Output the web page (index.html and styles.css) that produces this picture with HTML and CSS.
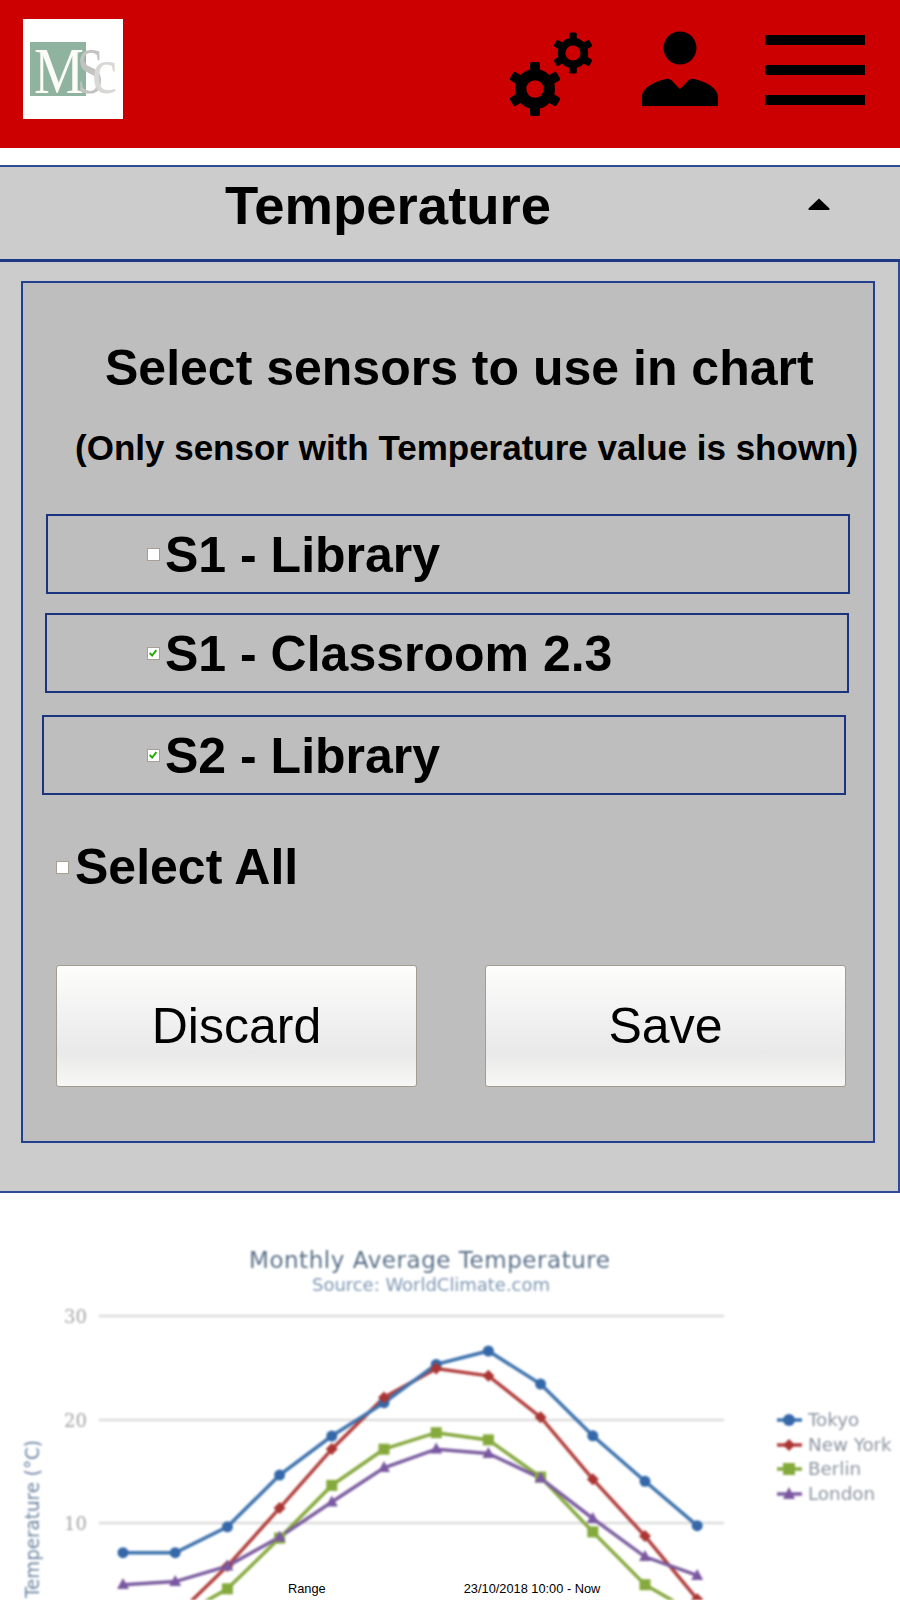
FILE: index.html
```html
<!DOCTYPE html>
<html lang="en">
<head>
<meta charset="utf-8">
<title>Temperature</title>
<link rel="stylesheet" href="styles.css">
</head>
<body>
<header class="topbar">
  <svg class="logo" viewBox="0 0 100 100" role="img" aria-label="MSc logo">
    <rect width="100" height="100" fill="#fff"/>
    <rect x="7" y="23" width="56" height="54" fill="#8fb39f"/>
    <text class="logo-m" x="11" y="74" textLength="50" lengthAdjust="spacingAndGlyphs">M</text>
    <text class="logo-s" x="54" y="74" textLength="27" lengthAdjust="spacingAndGlyphs">S</text>
    <text class="logo-c" x="69" y="74" textLength="25" lengthAdjust="spacingAndGlyphs">c</text>
  </svg>
  <div class="tools">
    <svg class="tool tool-gears" viewBox="500 0 96 148" aria-label="Settings">
      <defs>
        <g id="gear">
          <circle r="14.3" fill="none" stroke="#000" stroke-width="11.4"/>
          <rect x="-5" y="-27" width="10" height="54" rx="2"/>
          <rect x="-5" y="-27" width="10" height="54" rx="2" transform="rotate(60)"/>
          <rect x="-5" y="-27" width="10" height="54" rx="2" transform="rotate(120)"/>
        </g>
      </defs>
      <mask id="bighole"><rect x="500" width="96" height="148" fill="#fff"/><circle cx="535" cy="89" r="8.7" fill="#000"/></mask>
      <mask id="smallhole"><rect x="500" width="96" height="148" fill="#fff"/><circle cx="573" cy="53" r="7.6" fill="#000"/></mask>
      <g mask="url(#bighole)"><use href="#gear" transform="translate(535 89)"/></g>
      <g mask="url(#smallhole)"><use href="#gear" transform="translate(573 53) scale(.76)"/></g>
    </svg>
    <svg class="tool tool-user" viewBox="642 0 76 148" aria-label="User">
      <circle cx="680" cy="48" r="16.5"/>
      <path d="M642 106V97C642 88 654 82 664 79.500C668 78 671 79 674 83L680 89L686 83C689 79 692 78 696 79.500C706 82 718 88 718 97V106Z"/>
    </svg>
    <div class="burger" aria-label="Menu"><span></span><span></span><span></span></div>
  </div>
</header>

<main>
  <section class="accordion">
    <div class="accordion-head">
      <h1 class="accordion-title">Temperature</h1>
      <svg class="caret" viewBox="0 0 22 12"><path d="M11 0.5L21.5 10.5Q22 12 20.5 12H1.500Q0 12 0.500 10.500Z"/></svg>
    </div>
    <div class="panel">
      <div class="box">
        <h2 class="box-title">Select sensors to use in chart</h2>
        <p class="box-note">(Only sensor with Temperature value is shown)</p>
        <div class="sensor sensor-a"><span class="check"></span><span class="label">S1 - Library</span></div>
        <div class="sensor sensor-b"><span class="check is-on"><svg viewBox="0 0 12 12"><path d="M2 6L5 9.200L10 2.500"/></svg></span><span class="label">S1 - Classroom 2.3</span></div>
        <div class="sensor sensor-c"><span class="check is-on"><svg viewBox="0 0 12 12"><path d="M2 6L5 9.200L10 2.500"/></svg></span><span class="label">S2 - Library</span></div>
        <div class="select-all"><span class="check"></span><span>Select All</span></div>
        <div class="actions">
          <button class="btn" type="button">Discard</button>
          <button class="btn" type="button">Save</button>
        </div>
      </div>
    </div>
  </section>

  <section class="chart">
    <svg class="chart-svg" viewBox="0 1193 900 407">
      <text class="c-title" x="249" y="1268" textLength="361" lengthAdjust="spacing">Monthly Average Temperature</text>
      <text class="c-sub" x="312" y="1291" textLength="238" lengthAdjust="spacing">Source: WorldClimate.com</text>
      <g class="grid">
        <line x1="99" x2="724" y1="1316" y2="1316"/>
        <line x1="99" x2="724" y1="1420" y2="1420"/>
        <line x1="99" x2="724" y1="1523" y2="1523"/>
      </g>
      <text class="c-axis" x="64" y="1323">30</text>
      <text class="c-axis" x="64" y="1427">20</text>
      <text class="c-axis" x="64" y="1530">10</text>
      <text class="c-ytitle" transform="translate(39 1598) rotate(-90)" textLength="158" lengthAdjust="spacingAndGlyphs">Temperature (°C)</text>

      <polyline class="s s-ny" points="123,1627 175.2,1616.7 227.4,1566.1 279.6,1508.2 331.8,1449.2 384,1397.5 436.2,1368.6 488.400,1375.8 540.6,1417.2 592.8,1479.2 645,1536.1 697.2,1599.2"/>
      <polyline class="s s-berlin" points="123,1634.3 175.2,1618.8 227.4,1588.8 279.6,1538.1 331.8,1485.4 384,1449.2 436.2,1432.7 488.400,1439.9 540.6,1477.1 592.8,1531.9 645,1584.7 697.2,1614.7"/>
      <polyline class="s s-london" points="123,1584.7 175.2,1581.6 227.4,1566.1 279.6,1537.1 331.8,1502 384,1467.8 436.2,1449.2 488.400,1453.4 540.6,1478.2 592.8,1518.5 645,1556.8 697.2,1575.4"/>
      <polyline class="s s-tokyo" points="123,1552.7 175.2,1552.7 227.4,1526.8 279.6,1475.1 331.8,1436 384,1402.7 436.2,1364.4 488.400,1351 540.6,1384.1 592.8,1435.8 645,1481.3 697.2,1525.7"/>

      <g class="m-tokyo">
        <circle cx="123" cy="1552.7" r="5.500"/><circle cx="175.2" cy="1552.7" r="5.500"/><circle cx="227.4" cy="1526.8" r="5.500"/><circle cx="279.6" cy="1475.1" r="5.500"/><circle cx="331.8" cy="1436" r="5.500"/><circle cx="384" cy="1402.7" r="5.500"/><circle cx="436.2" cy="1364.4" r="5.500"/><circle cx="488.4" cy="1351" r="5.500"/><circle cx="540.6" cy="1384.1" r="5.500"/><circle cx="592.8" cy="1435.8" r="5.500"/><circle cx="645" cy="1481.3" r="5.500"/><circle cx="697.2" cy="1525.7" r="5.500"/>
      </g>
      <g class="m-ny">
        <path d="M279.6 1502l6 6-6 6-6-6zM331.800 1443l6 6-6 6-6-6zM384 1391.500l6 6-6 6-6-6zM436.200 1362.600l6 6-6 6-6-6zM488.400 1369.800l6 6-6 6-6-6zM540.600 1411.200l6 6-6 6-6-6zM592.800 1473.200l6 6-6 6-6-6zM645 1530.100l6 6-6 6-6-6zM697.200 1593.200l6 6-6 6-6-6zM227.400 1560.100l6 6-6 6-6-6z"/>
      </g>
      <g class="m-berlin">
        <rect x="221.900" y="1583.300" width="11" height="11"/><rect x="274.100" y="1532.600" width="11" height="11"/><rect x="326.300" y="1479.900" width="11" height="11"/><rect x="378.500" y="1443.700" width="11" height="11"/><rect x="430.700" y="1427.200" width="11" height="11"/><rect x="482.900" y="1434.400" width="11" height="11"/><rect x="535.100" y="1471.600" width="11" height="11"/><rect x="587.300" y="1526.400" width="11" height="11"/><rect x="639.500" y="1579.200" width="11" height="11"/>
      </g>
      <g class="m-london">
        <path d="M123 1578l6 11h-12zM175.200 1575l6 11h-12zM227.400 1559.500l6 11h-12zM279.600 1530.500l6 11h-12zM331.800 1495.500l6 11h-12zM384 1461l6 11h-12zM436.200 1442.500l6 11h-12zM488.400 1447l6 11h-12zM540.600 1471.500l6 11h-12zM592.800 1512l6 11h-12zM645 1550l6 11h-12zM697.200 1569l6 11h-12z"/>
      </g>

      <g class="legend">
        <line class="s-tokyo" x1="777" x2="802" y1="1420" y2="1420"/>
        <circle class="m-tokyo" cx="789" cy="1420" r="6"/>
        <text class="c-legend" x="808" y="1426">Tokyo</text>
        <line class="s-ny" x1="777" x2="802" y1="1445" y2="1445"/>
        <path class="m-ny" d="M789 1439l6 6-6 6-6-6z"/>
        <text class="c-legend" x="808" y="1451">New York</text>
        <line class="s-berlin" x1="777" x2="802" y1="1469" y2="1469"/>
        <rect class="m-berlin" x="783" y="1463" width="12" height="12"/>
        <text class="c-legend" x="808" y="1475">Berlin</text>
        <line class="s-london" x1="777" x2="802" y1="1494" y2="1494"/>
        <path class="m-london" d="M789 1487l6 12h-12z"/>
        <text class="c-legend" x="808" y="1500">London</text>
      </g>
    </svg>
    <div class="range"><span>Range</span><span>23/10/2018 10:00 - Now</span></div>
  </section>
</main>
</body>
</html>
```

FILE: styles.css
```css
* { box-sizing: border-box; }

html, body { margin: 0; padding: 0; background: #fff; }

body {
  width: 900px;
  height: 1600px;
  overflow: hidden;
  font-family: "Liberation Sans", Arial, sans-serif;
  color: #000;
}

.topbar {
  height: 148px;
  background: #cc0000;
  display: flex;
  justify-content: space-between;
  padding: 19px 35px 0 23px;
}

.logo { width: 100px; height: 100px; display: block; }
.logo text { font-family: "Liberation Serif", serif; font-size: 66px; }
.logo-m { fill: #fbfbf8; }
.logo-s { fill: #c2c2c0; }
.logo-c { fill: #d8d8d6; font-size: 60px; }

.tools { display: flex; margin-top: -19px; height: 148px; }
.tool { height: 148px; display: block; filter: blur(.6px); }
.tool-gears { width: 96px; margin-right: 46px; }
.tool-user { width: 76px; margin-right: 47px; }

.burger {
  width: 100px;
  padding-top: 35px;
  display: flex;
  flex-direction: column;
  gap: 20px;
}
.burger span { display: block; height: 10px; background: #000; }

.accordion { margin-top: 17px; }

.accordion-head {
  height: 97px;
  background: #cccccc;
  border-top: 2px solid #2f4a96;
  border-bottom: 3px solid #1f3888;
  display: flex;
  justify-content: space-between;
  padding: 0 70px 0 225px;
}

.accordion-title {
  margin: 0;
  font-size: 54.500px;
  line-height: 77px;
  font-weight: 700;
}

.caret { width: 22px; height: 12px; margin-top: 31px; }

.panel {
  background: #cccccc;
  border-right: 2px solid #2f4a96;
  border-bottom: 2px solid #2f4a96;
  padding: 19px 0 48px 20.500px;
}

.box {
  width: 854px;
  height: 862px;
  background: #bebebe;
  border: 2px solid #233f8f;
  display: flex;
  flex-direction: column;
  align-items: flex-start;
}

.box-title {
  margin: 55px 0 0 82.500px;
  font-size: 50px;
  line-height: 60px;
  font-weight: 700;
  white-space: nowrap;
}

.box-note {
  margin: 28px 0 0 52.500px;
  font-size: 35px;
  line-height: 44px;
  font-weight: 700;
  white-space: nowrap;
}

.sensor {
  width: 804px;
  height: 80px;
  border: 2px solid #1b3480;
  display: flex;
  align-items: center;
  padding-left: 99px;
  gap: 5px;
  font-size: 50px;
  font-weight: 700;
  line-height: 60px;
}
.sensor-a { margin: 44px 0 0 23.500px; }
.sensor-b { margin: 19px 0 0 22.500px; padding-left: 100px; }
.sensor-c { margin: 22px 0 0 19.500px; padding-left: 103px; }

.label { padding-top: 1px; }

.check {
  flex: none;
  width: 13px;
  height: 13px;
  background: #fff;
  border: 1.500px solid #a89f93;
  display: block;
}
.check svg { display: block; width: 10px; height: 10px; }
.check path { fill: none; stroke: #22aa00; stroke-width: 2.200; }

.select-all {
  display: flex;
  align-items: center;
  gap: 6px;
  margin: 42px 0 0 33.500px;
  font-size: 50px;
  font-weight: 700;
  line-height: 60px;
}

.actions {
  margin: 68px 0 0 33.500px;
  display: flex;
  gap: 68px;
}

.btn {
  width: 361px;
  height: 122px;
  border: 1px solid #a59c90;
  border-radius: 3px;
  background: linear-gradient(#fdfdfb 0%, #f3f3f3 35%, #e9e9e9 72%, #f7f7f5 100%);
  font-family: "Liberation Sans", Arial, sans-serif;
  font-size: 50px;
  color: #000;
}

.chart { position: relative; height: 407px; overflow: hidden; }

.chart-svg { width: 900px; height: 407px; display: block; filter: blur(1px); }

.c-title { font-family: "DejaVu Sans", sans-serif; font-size: 23px; fill: #5a7088; }
.c-sub { font-family: "DejaVu Sans", sans-serif; font-size: 18px; fill: #7f98b4; }
.c-axis { font-family: "DejaVu Serif", serif; font-size: 18px; fill: #a4a4a4; }
.c-ytitle { font-family: "DejaVu Sans", sans-serif; font-size: 19px; fill: #6b84a0; }
.c-legend { font-family: "DejaVu Sans", sans-serif; font-size: 18.300px; fill: #8c96a2; }

.grid line { stroke: #dcdcdc; stroke-width: 2.500; }

.s { fill: none; stroke-width: 3.500; }
.s-tokyo { stroke: #3d72ad; stroke-width: 3.500; }
.s-ny { stroke: #b13f3d; stroke-width: 3.500; }
.s-berlin { stroke: #86a93f; stroke-width: 3.500; }
.s-london { stroke: #7b5ca0; stroke-width: 3.500; }

.m-tokyo { fill: #3468a8; }
.m-ny { fill: #aa3533; }
.m-berlin { fill: #85aa3c; }
.m-london { fill: #7a58a2; }

.range {
  position: absolute;
  left: 288px;
  top: 388px;
  display: flex;
  gap: 138px;
  font-size: 12.800px;
  line-height: 15px;
  color: #000;
}
```
